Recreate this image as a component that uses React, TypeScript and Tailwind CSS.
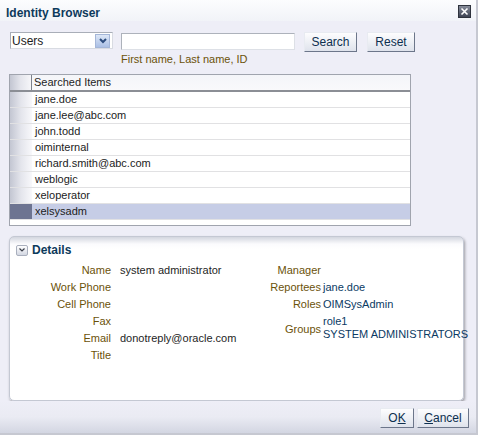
import React from "react";

const items = [
  "jane.doe",
  "jane.lee@abc.com",
  "john.todd",
  "oiminternal",
  "richard.smith@abc.com",
  "weblogic",
  "xeloperator",
  "xelsysadm",
];

function Btn({ children, w }: { children: React.ReactNode; w: string }) {
  return (
    <div
      className={`${w} h-[20px] flex items-center justify-center bg-gradient-to-b from-[#fdfdfe] to-[#dfe3ec] border border-[#e8ebf1] border-r-[#6c768a] border-b-[#6c768a] text-[12px] text-[#0d2f4f] leading-none`}
    >
      {children}
    </div>
  );
}

export default function App() {
  const leftRows: [string, string][] = [
    ["Name", "system administrator"],
    ["Work Phone", ""],
    ["Cell Phone", ""],
    ["Fax", ""],
    ["Email", "donotreply@oracle.com"],
    ["Title", ""],
  ];
  return (
    <div className="w-[478px] h-[435px] bg-[#eeeef7] font-['Liberation_Sans',Arial,sans-serif] text-[11px] text-[#222] flex flex-col border-r-2 border-[#c6c8d1] overflow-hidden">
      {/* Title bar */}
      <div className="h-[21px] shrink-0 flex items-start justify-between bg-gradient-to-b from-[#fcfdfe] to-[#f1f3f8]">
        <span className="ml-[6px] mt-[7px] text-[12px] leading-[12px] font-bold text-[#0d3a5b]">
          Identity Browser
        </span>
        <div className="mt-[5px] mr-[5px] w-[13px] h-[13px] border border-[#2e333d] bg-gradient-to-b from-[#868c9a] to-[#3e4453] flex items-center justify-center">
          <svg width="9" height="9" viewBox="0 0 9 9">
            <path d="M1.5 1.5 L7.5 7.5 M7.5 1.5 L1.5 7.5" stroke="#ffffff" strokeWidth="1.6" />
          </svg>
        </div>
      </div>

      {/* Search row */}
      <div className="h-[42px] mt-[11px] shrink-0 flex items-start">
        <div className="ml-[10px] w-[103px] h-[17px] bg-white border border-[#a9aeb8] border-r-[#d8dbe2] border-b-[#d8dbe2] flex items-center justify-between">
          <span className="ml-[1px] text-[12px] leading-none text-[#1c1c1c]">Users</span>
          <div className="mr-[2px] w-[15px] h-[14px] border border-[#a4b6d8] bg-gradient-to-b from-[#dde7f7] to-[#aabfe5] flex items-center justify-center">
            <svg width="10" height="8" viewBox="0 0 10 8">
              <polyline points="2,2 5,5 8,2" fill="none" stroke="#2c4c7e" strokeWidth="2" />
            </svg>
          </div>
        </div>
        <div className="ml-[8px] mt-[1px] flex flex-col">
          <div className="w-[174px] h-[17px] bg-white border border-[#adb2bb] border-r-[#dde0e6] border-b-[#dde0e6]" />
          <span className="mt-[3px] leading-[12px] text-[11px] text-[#6b5209]">
            First name, Last name, ID
          </span>
        </div>
        <div className="ml-[9px]">
          <Btn w="w-[53px]">Search</Btn>
        </div>
        <div className="ml-[10px]">
          <Btn w="w-[48px]">Reset</Btn>
        </div>
      </div>

      {/* Table */}
      <div className="ml-[9px] w-[402px] h-[152px] shrink-0 bg-white border border-[#a0a4ae] flex flex-col">
        <div className="h-[17px] flex bg-gradient-to-b from-[#f4f5f9] to-[#f9f9fb] border-b-2 border-[#8b8e95]">
          <div className="w-[22px] h-full bg-gradient-to-r from-[#c3c6d2] via-[#e4e5ec] to-[#f6f6f9] border-r border-[#7d828c]" />
          <div className="flex-1 flex items-center pl-[2px] text-[11px] leading-none text-[#1e1e1e]">
            Searched Items
          </div>
        </div>
        {items.map((it, i) => {
          const sel = i === items.length - 1;
          return (
            <div
              key={it}
              className={`h-[16px] flex border-b border-[#e1e1e3] ${sel ? "bg-[#c6cde6]" : ""}`}
            >
              <div
                className={`w-[22px] h-full ${
                  sel ? "bg-[#6d7491]" : "bg-gradient-to-r from-[#c3c6d2] via-[#e4e5ec] to-[#f8f8fb]"
                }`}
              />
              <div className="flex-1 flex items-center pl-[3px] text-[11px] leading-none text-[#1c1c1c]">
                {it}
              </div>
            </div>
          );
        })}
      </div>

      {/* Details panel */}
      <div className="ml-[9px] mt-[10px] w-[455px] h-[165px] shrink-0 rounded-[5px] border border-[#c4c8d3] shadow-[1px_2px_3px_rgba(0,0,0,0.35)] bg-[linear-gradient(to_bottom,#d3d6df_0px,#fbfbfd_7px,#ffffff_12px)] flex flex-col">
        <div className="h-[16px] mt-[5px] flex items-center pl-[6px]">
          <div className="w-[12px] h-[11px] border border-[#a9afbd] rounded-[2px] bg-gradient-to-b from-[#ffffff] to-[#d3d7e2] flex items-center justify-center">
            <svg width="8" height="6" viewBox="0 0 8 6">
              <polyline points="1.5,1.5 4,4 6.5,1.5" fill="none" stroke="#3a3f4a" strokeWidth="1.2" />
            </svg>
          </div>
          <span className="ml-[4px] text-[12px] font-bold leading-none text-[#0d3a5b]">Details</span>
        </div>
        <div className="mt-[4px] flex whitespace-nowrap text-[11px] leading-none">
          <div className="w-[101px] shrink-0 flex flex-col items-end text-[#6b5209]">
            {leftRows.map(([l]) => (
              <div key={l} className="h-[17px] flex items-center">
                {l}
              </div>
            ))}
          </div>
          <div className="ml-[9px] w-[120px] shrink-0 flex flex-col">
            {leftRows.map(([l, v]) => (
              <div key={l} className="h-[17px] flex items-center text-[#1e1e1e]">
                {v}
              </div>
            ))}
          </div>
          <div className="w-[81px] shrink-0 flex flex-col items-end text-[#6b5209]">
            <div className="h-[17px] flex items-center">Manager</div>
            <div className="h-[17px] flex items-center">Reportees</div>
            <div className="h-[17px] flex items-center">Roles</div>
            <div className="h-[30px] flex items-center pt-[2px]">Groups</div>
          </div>
          <div className="ml-[2px] shrink-0 flex flex-col text-[#0b3a63]">
            <div className="h-[17px]" />
            <div className="h-[17px] flex items-center">jane.doe</div>
            <div className="h-[17px] flex items-center">OIMSysAdmin</div>
            <div className="pt-[2px] flex flex-col">
              <div className="h-[13px] flex items-center">role1</div>
              <div className="h-[13px] flex items-center">SYSTEM ADMINISTRATORS</div>
            </div>
          </div>
        </div>
      </div>

      {/* Footer */}
      <div className="flex-1 flex justify-end items-start pt-[7px] pr-[7px] gap-[3px] bg-gradient-to-b from-[#eeeef7] via-[#eaebf3] to-[#d3d6e2] border-b-2 border-[#c6c8d1]">
        <Btn w="w-[34px]">
          <span>
            O<span className="underline">K</span>
          </span>
        </Btn>
        <Btn w="w-[52px]">
          <span>
            <span className="underline">C</span>ancel
          </span>
        </Btn>
      </div>
    </div>
  );
}
